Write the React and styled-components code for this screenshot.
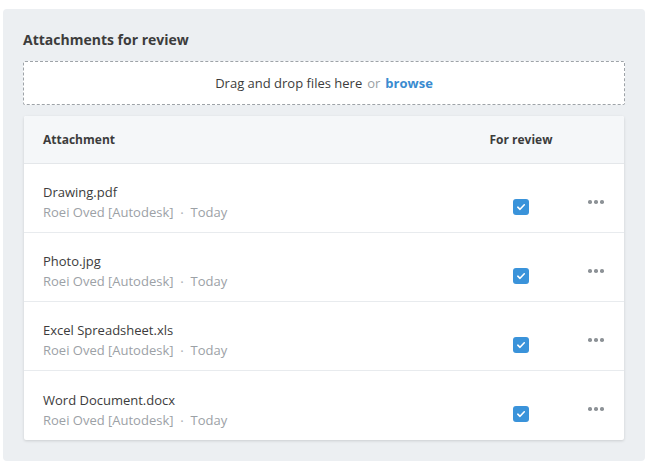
import React from "react";
import styled, { createGlobalStyle } from "styled-components";

const files = [
  { name: "Drawing.pdf", author: "Roei Oved [Autodesk]", when: "Today" },
  { name: "Photo.jpg", author: "Roei Oved [Autodesk]", when: "Today" },
  { name: "Excel Spreadsheet.xls", author: "Roei Oved [Autodesk]", when: "Today" },
  { name: "Word Document.docx", author: "Roei Oved [Autodesk]", when: "Today" },
];

function App() {
  return (
    <>
      <GlobalStyle />
      <Panel>
        <Title>Attachments for review</Title>
        <DropZone>
          Drag and drop files here <Muted>or</Muted> <Link>browse</Link>
        </DropZone>
        <Card>
          <HeaderRow>
            <HeadCell>Attachment</HeadCell>
            <HeadCell center>For review</HeadCell>
            <span />
          </HeaderRow>
          {files.map((f) => (
            <Row key={f.name}>
              <FileInfo>
                <FileName>{f.name}</FileName>
                <Meta>
                  {f.author}
                  <Dot>•</Dot>
                  {f.when}
                </Meta>
              </FileInfo>
              <CheckCell>
                <Check>
                  <svg width="10" height="10" viewBox="0 0 10 10">
                    <path
                      d="M1.8 5.2 L4 7.3 L8.3 2.8"
                      fill="none"
                      stroke="#fff"
                      strokeWidth="1.6"
                      strokeLinecap="round"
                      strokeLinejoin="round"
                    />
                  </svg>
                </Check>
              </CheckCell>
              <More>
                <i />
                <i />
                <i />
              </More>
            </Row>
          ))}
        </Card>
      </Panel>
    </>
  );
}

const GlobalStyle = createGlobalStyle`
  body {
    margin: 0;
    background: #fff;
    font-family: "Open Sans", "Noto Sans", sans-serif;
    color: #3c3c3c;
  }
`;

const Panel = styled.div`
  margin: 9px 0 0 3px;
  width: 642px;
  height: 452px;
  box-sizing: border-box;
  padding: 20px;
  background: #eceff2;
  border-radius: 4px;
  display: flex;
  flex-direction: column;
`;

const Title = styled.div`
  font-size: 14px;
  font-weight: 700;
  line-height: 22px;
  color: #3c3c3c;
  margin-bottom: 10px;
`;

const DropZone = styled.div`
  height: 44px;
  box-sizing: border-box;
  border: 1px dashed #9ea3a8;
  border-radius: 2px;
  background: #fff;
  display: flex;
  align-items: center;
  justify-content: center;
  gap: 5px;
  font-size: 13px;
  color: #3c3c3c;
  margin-bottom: 11px;
`;

const Muted = styled.span`
  color: #9a9fa4;
`;

const Link = styled.span`
  color: #3a8bd0;
  font-weight: 700;
`;

const Card = styled.div`
  margin: 0 1px;
  background: #fff;
  border-radius: 2px;
  box-shadow: 0 1px 3px rgba(0, 0, 0, 0.14);
  overflow: hidden;
`;

const cols = "1fr 66px 70px";

const HeaderRow = styled.div`
  display: grid;
  grid-template-columns: ${cols};
  align-items: center;
  height: 48px;
  padding-left: 19px;
  background: #f5f7f9;
  border-bottom: 1px solid #e4e7ea;
  box-sizing: border-box;
`;

const HeadCell = styled.div`
  font-size: 12px;
  font-weight: 700;
  color: #3c3c3c;
  white-space: nowrap;
  text-align: ${(p) => (p.center ? "center" : "left")};
`;

const Row = styled.div`
  display: grid;
  grid-template-columns: ${cols};
  height: 69px;
  padding-left: 19px;
  box-sizing: border-box;
  border-bottom: 1px solid #e8ebee;
  &:last-child {
    border-bottom: none;
  }
`;

const FileInfo = styled.div`
  display: flex;
  flex-direction: column;
  justify-content: center;
  padding-top: 9px;
`;

const FileName = styled.div`
  font-size: 13px;
  line-height: 20px;
  color: #3c3c3c;
`;

const Meta = styled.div`
  font-size: 13px;
  line-height: 21px;
  color: #9ca1a6;
`;

const Dot = styled.span`
  font-size: 8px;
  margin: 0 7px;
  vertical-align: 1px;
  color: #b4b8bc;
`;

const CheckCell = styled.div`
  display: flex;
  justify-content: center;
  padding-top: 35px;
`;

const Check = styled.span`
  width: 16px;
  height: 16px;
  border-radius: 3px;
  background: #3a93da;
  display: flex;
  align-items: center;
  justify-content: center;
`;

const More = styled.div`
  display: flex;
  gap: 2.5px;
  padding: 36px 0 0 34px;
  & > i {
    width: 3.5px;
    height: 3.5px;
    border-radius: 50%;
    background: #8d9297;
  }
`;

export default App;
